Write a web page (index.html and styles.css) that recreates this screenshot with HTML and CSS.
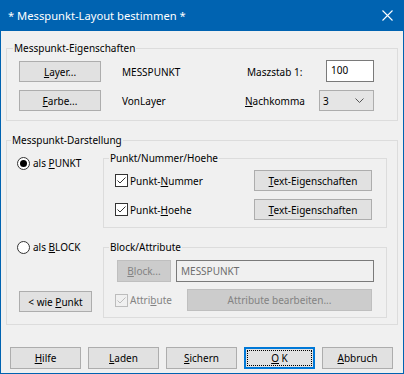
FILE: index.html
```html
<!DOCTYPE html>
<html lang="de">
<head>
  <meta charset="UTF-8" />
  <title>Messpunkt-Layout bestimmen</title>
  <link rel="stylesheet" href="styles.css">
</head>
<body>
  <div class="window">
    <div class="titlebar">
      <span class="title">* Messpunkt-Layout bestimmen *</span>
      <svg class="close" width="11" height="11" viewBox="0 0 11 11">
        <path d="M0.5 0.5 L10.5 10.5 M10.5 0.5 L0.5 10.5" stroke="#fff" stroke-width="1.1" fill="none" />
      </svg>
    </div>

    <div class="dialog">
      <fieldset class="group">
        <legend>Messpunkt-Eigenschaften</legend>
        <div class="props">
          <button class="btn"><u>L</u>ayer...</button>
          <span class="value">MESSPUNKT</span>
          <span class="label">Maszstab 1:</span>
          <input class="textbox" type="text" value="100" />

          <button class="btn"><u>F</u>arbe...</button>
          <span class="value">VonLayer</span>
          <span class="label label-nk"><u>N</u>achkomma</span>
          <div class="combo">
            <span>3</span>
            <svg width="9" height="5" viewBox="0 0 9 5">
              <path d="M0.5 0.5 L4.5 4.5 L8.5 0.5" stroke="#555" fill="none" />
            </svg>
          </div>
        </div>
      </fieldset>

      <fieldset class="group group-display">
        <legend>Messpunkt-Darstellung</legend>
        <div class="display">
          <div class="side">
            <label class="radio"><span class="dot checked"></span><span>als <u>P</u>UNKT</span></label>
          </div>

          <fieldset class="inner">
            <legend>Punkt/Nummer/Hoehe</legend>
            <div class="row">
              <label class="check">
                <svg class="box" width="13" height="13" viewBox="0 0 13 13">
                  <rect x="0.5" y="0.5" width="12" height="12" fill="#fff" stroke="#333" />
                  <path d="M2.5 6.5 L5 9 L10.5 3.5" stroke="#333" fill="none" />
                </svg>
                <span>Punkt-<u>N</u>ummer</span>
              </label>
              <button class="btn btn-text"><u>T</u>ext-Eigenschaften</button>
            </div>
            <div class="row">
              <label class="check">
                <svg class="box" width="13" height="13" viewBox="0 0 13 13">
                  <rect x="0.5" y="0.5" width="12" height="12" fill="#fff" stroke="#333" />
                  <path d="M2.5 6.5 L5 9 L10.5 3.5" stroke="#333" fill="none" />
                </svg>
                <span>Punkt-<u>H</u>oehe</span>
              </label>
              <button class="btn btn-text"><u>T</u>ext-Eigenschaften</button>
            </div>
          </fieldset>

          <div class="side side-block">
            <label class="radio"><span class="dot"></span><span>als <u>B</u>LOCK</span></label>
            <button class="btn btn-wie">&lt; wie <u>P</u>unkt</button>
          </div>

          <fieldset class="inner inner-block">
            <legend>Block/Attribute</legend>
            <div class="row">
              <button class="btn btn-block" disabled><u>B</u>lock...</button>
              <div class="field">MESSPUNKT</div>
            </div>
            <div class="row">
              <label class="check disabled">
                <svg class="box" width="13" height="13" viewBox="0 0 13 13">
                  <rect x="0.5" y="0.5" width="12" height="12" fill="#f0f0f0" stroke="#bcbcbc" />
                  <path d="M2.5 6.5 L5 9 L10.5 3.5" stroke="#bcbcbc" fill="none" />
                </svg>
                <span>Attri<u>b</u>ute</span>
              </label>
              <button class="btn btn-attr" disabled>Attribute bearbeiten...</button>
            </div>
          </fieldset>
        </div>
      </fieldset>

      <div class="actions">
        <button class="btn"><u>H</u>ilfe</button>
        <button class="btn"><u>L</u>aden</button>
        <button class="btn"><u>S</u>ichern</button>
        <button class="btn btn-ok"><span><u>O</u>&nbsp;K</span></button>
        <button class="btn"><u>A</u>bbruch</button>
      </div>
    </div>
  </div>
</body>
</html>
```

FILE: styles.css
```css
body {
  margin: 0;
  font-family: 'Noto Sans', sans-serif;
  font-size: 10px;
  color: #000;
}

.window {
  width: 404px;
  height: 374px;
  background-color: #f0f0f0;
}

.titlebar {
  height: 31px;
  background-color: #0063b1;
  color: #fff;
  display: flex;
  align-items: center;
  padding: 0 11px 0 8px;
}

.title {
  font-size: 11.2px;
  flex: 1;
}

.close {
  display: block;
}

.dialog {
  height: 343px;
  box-sizing: border-box;
  border: 1px solid #0063b1;
  border-top: none;
  padding: 9px 5px 0 5px;
}

fieldset {
  margin: 0;
  min-width: 0;
  border: 1px solid #dcdcdc;
}

legend {
  line-height: 16px;
  padding: 0 1px;
  margin-left: -6px;
}

.group {
  padding: 5px 12px 9px 12px;
}

.btn {
  font-family: inherit;
  font-size: 10px;
  color: #000;
  height: 21px;
  padding: 0;
  background-color: #e1e1e1;
  border: 1px solid #adadad;
  border-radius: 0;
}

.btn:disabled {
  background-color: #cccccc;
  border-color: #bfbfbf;
  color: #838383;
}

.props {
  display: grid;
  grid-template-columns: 82px 146px 72px 55px;
  row-gap: 8px;
  align-items: center;
}

.value {
  padding-left: 21px;
}

.label-nk {
  margin-left: -2px;
}

.textbox {
  justify-self: end;
  width: 48px;
  height: 22px;
  box-sizing: border-box;
  border: 1px solid #7a7a7a;
  background: #fff;
  font-family: inherit;
  font-size: 10px;
  padding: 0 0 2px 4px;
  margin-top: -1px;
  outline: none;
}

.combo {
  height: 21px;
  box-sizing: border-box;
  border: 1px solid #adadad;
  background-color: #e5e5e5;
  display: flex;
  align-items: center;
  justify-content: space-between;
  padding: 0 9px 0 3px;
}

.group-display {
  margin-top: 11px;
  padding: 2px 10px 6px 10px;
}

.display {
  display: grid;
  grid-template-columns: 86px 284px;
  row-gap: 11px;
}

.side {
  padding-top: 5px;
}

.side-block {
  padding: 0 0 6px 0;
  display: flex;
  flex-direction: column;
  justify-content: space-between;
}

.radio,
.check {
  display: flex;
  align-items: center;
  line-height: 16px;
}

.dot {
  width: 13px;
  height: 13px;
  box-sizing: border-box;
  border: 1px solid #333;
  border-radius: 50%;
  background: #fff;
  margin-right: 3px;
  display: flex;
  align-items: center;
  justify-content: center;
}

.dot.checked::after {
  content: '';
  width: 7px;
  height: 7px;
  border-radius: 50%;
  background: #000;
}

.btn-wie {
  width: 73px;
  margin-left: 2px;
}

.inner {
  padding: 4px 14px 7px 11px;
}

.inner .row {
  display: flex;
  align-items: center;
  justify-content: space-between;
  height: 21px;
}

.inner .row + .row {
  margin-top: 8px;
}

.box {
  display: block;
  margin-right: 2px;
}

.check.disabled {
  color: #838383;
}

.btn-text {
  width: 118px;
}

.inner-block {
  padding: 5px 14px 6px 11px;
}

.inner-block .row {
  height: 22px;
}

.inner-block .row + .row {
  margin-top: 7px;
}

.btn-block {
  width: 54px;
  height: 22px;
  margin-left: 2px;
}

.field {
  width: 198px;
  height: 22px;
  box-sizing: border-box;
  border: 1px solid #7a7a7a;
  color: #6d6d6d;
  padding: 3px 0 0 4px;
  margin-right: -2px;
}

.btn-attr {
  width: 185px;
  height: 22px;
}

.actions {
  display: flex;
  gap: 7px;
  margin: 22px 0 0 4px;
}

.actions .btn {
  width: 71px;
  height: 22px;
}

.btn-ok {
  border: 2px solid #0078d7;
  padding: 1px;
}

.btn-ok span {
  display: flex;
  align-items: center;
  justify-content: center;
  height: 100%;
  border: 1px dotted #000;
  box-sizing: border-box;
}
```
